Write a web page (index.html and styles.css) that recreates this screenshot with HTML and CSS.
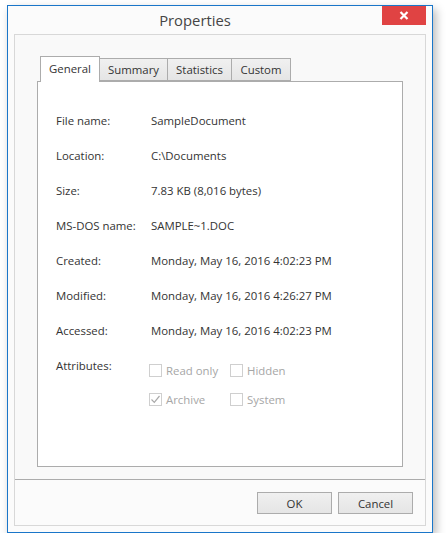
FILE: index.html
```html
<!DOCTYPE html>
<html>
<head>
<meta charset="utf-8">
<link rel="stylesheet" href="styles.css">
</head>
<body>
<div class="window">
  <div class="titlebar">
    <div class="title">Properties</div>
    <div class="close"><svg width="10" height="9" viewBox="0 0 10 9"><path d="M1.5 1 L8.5 8 M8.5 1 L1.5 8" stroke="#fff" stroke-width="2.2" fill="none"/></svg></div>
  </div>
  <div class="panel">
    <div class="content">
      <div class="tabs">
        <div class="tab active" style="width:60px">General</div>
        <div class="tab" style="width:68px">Summary</div>
        <div class="tab" style="width:64px">Statistics</div>
        <div class="tab" style="width:59px">Custom</div>
      </div>
      <div class="page">
        <div class="grid">
          <div class="lbl">File name:</div><div class="val">SampleDocument</div>
          <div class="lbl">Location:</div><div class="val">C:\Documents</div>
          <div class="lbl">Size:</div><div class="val">7.83 KB (8,016 bytes)</div>
          <div class="lbl">MS-DOS name:</div><div class="val">SAMPLE~1.DOC</div>
          <div class="lbl">Created:</div><div class="val">Monday, May 16, 2016 4:02:23 PM</div>
          <div class="lbl">Modified:</div><div class="val">Monday, May 16, 2016 4:26:27 PM</div>
          <div class="lbl">Accessed:</div><div class="val">Monday, May 16, 2016 4:02:23 PM</div>
          <div class="lbl">Attributes:</div>
          <div class="attrs">
            <div class="chk"><span class="box"></span>Read only</div>
            <div class="chk"><span class="box"></span>Hidden</div>
            <div class="chk"><span class="box"><svg width="11" height="11" viewBox="0 0 11 11"><path d="M1.5 5.5 L4.3 8.3 L9.5 2" stroke="#a9a9a9" stroke-width="1.2" fill="none"/></svg></span>Archive</div>
            <div class="chk"><span class="box"></span>System</div>
          </div>
        </div>
      </div>
    </div>
    <div class="buttons">
      <div class="btn">OK</div>
      <div class="btn">Cancel</div>
    </div>
  </div>
</div>
</body>
</html>
```
FILE: styles.css
```css
html, body {
  margin: 0;
  padding: 0;
  background: #ffffff;
}
body {
  font-family: "Segoe UI", "Open Sans", "Noto Sans", sans-serif;
  font-size: 11.4px;
  color: #333333;
}
.window {
  position: relative;
  margin: 5px 0 0 7px;
  border: 1px solid #1a76c9;
  background: #fbfbfb;
  box-shadow: 3px 4px 9px rgba(0, 0, 0, 0.28);
  display: flex;
  flex-direction: column;
  padding: 0 6px 6px 6px;
  box-sizing: content-box;
  width: 412px;
  height: 520px;
}
.titlebar {
  height: 28px;
  display: flex;
  padding-right: 50px;
}
.title {
  flex: 1;
  text-align: center;
  font-size: 14.8px;
  line-height: 29px;
  color: #454545;
}
.close {
  position: absolute;
  top: 0;
  right: 6px;
  width: 44px;
  height: 19px;
  background: #e04343;
  display: flex;
  align-items: center;
  justify-content: center;
}
.panel {
  flex: 1;
  border: 1px solid #d8d8d8;
  display: flex;
  flex-direction: column;
  background: #f9f9f9;
}
.content {
  flex: 1;
  padding: 22px 22px 12px 22px;
  display: flex;
  flex-direction: column;
}
.tabs {
  display: flex;
  height: 24px;
  padding-left: 3px;
  align-items: flex-end;
  position: relative;
  z-index: 1;
}
.tab {
  box-sizing: border-box;
  height: 23px;
  border: 1px solid #acacac;
  border-left: none;
  background: linear-gradient(#f0f0f0, #e5e5e5);
  display: flex;
  align-items: center;
  justify-content: center;
  color: #333;
  padding-bottom: 1px;
}
.tab.active {
  height: 26px;
  margin-bottom: -1px;
  border-left: 1px solid #acacac;
  border-bottom: none;
  background: #ffffff;
  padding-bottom: 2px;
}
.page {
  flex: 1;
  border: 1px solid #acacac;
  background: #ffffff;
}
.grid {
  display: grid;
  grid-template-columns: 95px 1fr;
  grid-auto-rows: 35px;
  padding: 21px 0 0 18px;
  align-items: center;
  line-height: 16px;
}
.attrs {
  align-self: start;
  margin-top: 8px;
  display: grid;
  grid-template-columns: 81px 1fr;
  grid-auto-rows: 29px;
  align-items: center;
  color: #a6a6a6;
  margin-left: -2px;
}
.chk {
  display: flex;
  align-items: center;
}
.box {
  box-sizing: border-box;
  width: 13px;
  height: 13px;
  border: 1px solid #cfcfcf;
  margin-right: 4px;
  display: flex;
  align-items: center;
  justify-content: center;
}
.buttons {
  border-top: 1px solid #acacac;
  height: 46px;
  background: #fbfbfb;
  display: flex;
  justify-content: flex-end;
  align-items: flex-start;
  gap: 6px;
  padding: 12px 12px 0 0;
  box-sizing: border-box;
}
.btn {
  box-sizing: border-box;
  width: 75px;
  height: 22px;
  border: 1px solid #acacac;
  background: linear-gradient(#f0f0f0, #e5e5e5);
  display: flex;
  align-items: center;
  justify-content: center;
  color: #333;
}
```
